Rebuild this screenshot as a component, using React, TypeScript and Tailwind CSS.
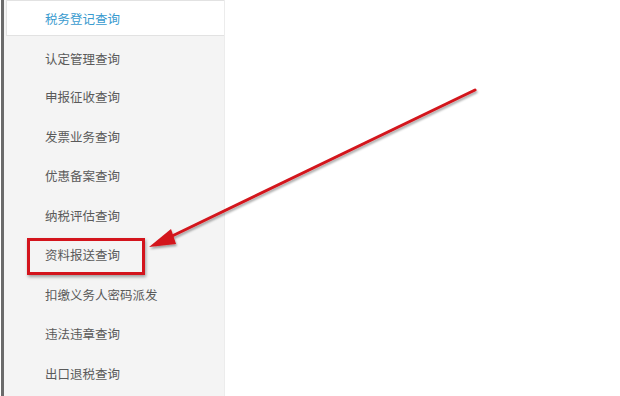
const items = [
  '税务登记查询',
  '认定管理查询',
  '申报征收查询',
  '发票业务查询',
  '优惠备案查询',
  '纳税评估查询',
  '资料报送查询',
  '扣缴义务人密码派发',
  '违法违章查询',
  '出口退税查询',
]

export default function App() {
  return (
    <div
      className="relative w-[620px] h-[396px] overflow-hidden bg-white flex"
      style={{ fontFamily: '"Noto Sans CJK SC", "Microsoft YaHei", sans-serif' }}
    >
      <div className="w-[3px] bg-[#6b6b6b] ml-[1px]" />
      <div className="w-[221px] bg-[#f4f4f4] border-r border-[#ececec]">
        {items.map((t, i) =>
          i === 0 ? (
            <div
              key={t}
              className="ml-[2px] h-[36px] pt-[2px] bg-white border border-[#e2e2e2] border-r-0 flex items-center pl-[38px] text-[12.5px] text-[#3a9bcf]"
            >
              {t}
            </div>
          ) : (
            <div
              key={t}
              className={`ml-[2px] flex items-center pl-[39px] text-[12.5px] text-[#5a5a5a] ${i === 1 ? 'h-[42px] pt-[5px]' : 'h-[39.5px]'}`}
            >
              {t}
            </div>
          ),
        )}
      </div>

      {/* highlight box */}
      <div className="absolute left-[27px] top-[238px] w-[118px] h-[37px] border-[3px] border-[#d3141c] shadow-[1px_2px_3px_rgba(0,0,0,0.35)]" />

      {/* arrow */}
      <svg className="absolute left-0 top-0" width="620" height="396" viewBox="0 0 620 396">
        <defs>
          <filter id="sh" x="-10%" y="-10%" width="120%" height="130%">
            <feDropShadow dx="1" dy="2" stdDeviation="1.2" floodColor="#000" floodOpacity="0.35" />
          </filter>
        </defs>
        <g filter="url(#sh)">
          <line x1="475" y1="90" x2="168" y2="238" stroke="#d3141c" strokeWidth="3" strokeLinecap="round" />
          <polygon points="149,247 171,229 176,244" fill="#d3141c" />
        </g>
      </svg>
    </div>
  )
}
